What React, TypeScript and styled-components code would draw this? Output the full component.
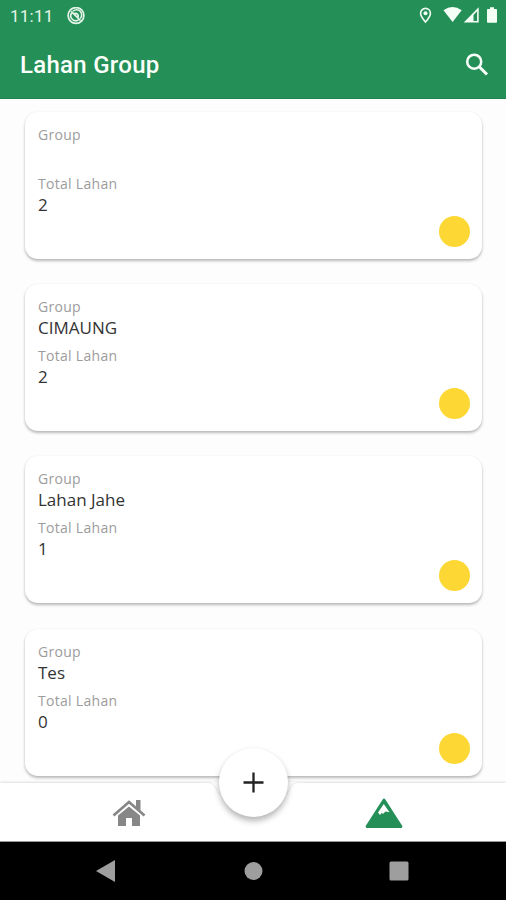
import React from 'react';
import styled, { createGlobalStyle } from 'styled-components';

const GlobalStyle = createGlobalStyle`
  * { box-sizing: border-box; }
  body { margin: 0; background: #fdfdfd; }
`;

const Screen = styled.div`
  width: 506px;
  height: 900px;
  display: flex;
  flex-direction: column;
  overflow: hidden;
  background: #fdfdfd;
  font-family: 'Open Sans', sans-serif;
`;

const Header = styled.header`
  height: 98.5px;
  flex: none;
  background: #249057;
  border-bottom: 1px solid #1d864d;
  color: #fafffb;
  font-family: Roboto, sans-serif;
`;

const StatusBar = styled.div`
  height: 32px;
  display: flex;
  align-items: center;
  padding: 0 8px 0 10px;
  color: #e4f5e8;
`;

const Clock = styled.span`
  width: 57px;
  font-size: 17px;
  line-height: 32px;
  letter-spacing: 0.25px;
`;

const StatusIcons = styled.div`
  display: flex;
  align-items: center;
  margin-left: auto;
  color: #f4fff6;
`;

const AppBar = styled.div`
  height: 66px;
  display: flex;
  align-items: center;
  justify-content: space-between;
  padding: 0 17px 0 20px;
`;

const Title = styled.h1`
  margin: 0;
  font-size: 24px;
  font-weight: 500;
  line-height: 32px;
  letter-spacing: 0.28px;
`;

const IconButton = styled.button`
  display: flex;
  padding: 0;
  border: 0;
  background: none;
  color: inherit;
`;

const List = styled.main`
  flex: 1;
  min-height: 0;
  overflow: hidden;
  display: flex;
  flex-direction: column;
  gap: 25.36px;
  padding: 13px 24px 0 25px;
`;

const Card = styled.article`
  flex: none;
  height: 147px;
  display: flex;
  justify-content: space-between;
  padding: 12px 12px 12px 13px;
  border-radius: 13px;
  background: #fff;
  box-shadow: 0 2px 3px rgba(0, 0, 0, 0.27), 0 0 2px rgba(0, 0, 0, 0.05);
`;

const Fields = styled.dl`
  margin: 0;
`;

const Label = styled.dt`
  height: 21px;
  font-size: 14px;
  line-height: 21px;
  letter-spacing: 0.3px;
  color: #9c9c9c;
`;

const Value = styled.dd`
  height: 22px;
  margin: 0 0 6px;
  font-size: 17px;
  line-height: 22px;
  color: #333;
`;

const Dot = styled.span`
  align-self: flex-end;
  width: 31px;
  height: 31px;
  border-radius: 50%;
  background: #fdd835;
`;

const BottomNav = styled.nav`
  position: relative;
  flex: none;
  height: 59px;
  margin-top: -59px;
  display: grid;
  grid-template-columns: 1fr 1fr;
  background: #fff;
  border-bottom: 1px solid #999;
  box-shadow: 0 -1px 2px rgba(0, 0, 0, 0.12);
`;

const Tab = styled.a<{ $color: string; $shift: number }>`
  display: flex;
  justify-content: center;
  padding-top: 14px;
  padding-left: ${({ $shift }) => $shift}px;
  color: ${({ $color }) => $color};
`;

const Notch = styled.svg`
  position: absolute;
  left: 199px;
  top: -1px;
`;

const AddButton = styled.button`
  position: absolute;
  left: 219px;
  top: -35px;
  width: 69px;
  height: 69px;
  display: flex;
  align-items: center;
  justify-content: center;
  padding: 0;
  border: 0;
  border-radius: 50%;
  background: #fff;
  color: #222;
  box-shadow: 0 4px 6px rgba(0, 0, 0, 0.28), 0 0 3px rgba(0, 0, 0, 0.04);
`;

const SystemNav = styled.footer`
  flex: none;
  height: 58px;
  display: flex;
  align-items: center;
  justify-content: space-between;
  padding: 0 97px 0 96px;
  background: #000;
  color: #9e9e9e;
`;

const groups = [
  { name: '', total: 2 },
  { name: 'CIMAUNG', total: 2 },
  { name: 'Lahan Jahe', total: 1 },
  { name: 'Tes', total: 0 },
];

export default function App() {
  return (
    <>
      <GlobalStyle />
      <Screen>
        <Header>
          <StatusBar>
            <Clock>11:11</Clock>
            <svg width="18" height="18" viewBox="0 0 18 18" fill="none" stroke="currentColor">
              <circle cx="9" cy="8.500" r="7.900" strokeWidth="1.700" />
              <path d="M4.800 5.700a5 5 0 0 0 7 7M6 4.300a5 5 0 0 1 7.200 7.200" strokeWidth="1.600" />
              <path d="M4.200 4.300 13.500 13.500M7.300 6.500a3 3 0 0 1 3.800 3.800" strokeWidth="1.700" />
            </svg>
            <StatusIcons>
              <svg width="79" height="18" viewBox="0 0 79 18" fill="currentColor">
                <path
                  d="M6.500 1.400a4.900 4.900 0 0 0-4.900 4.900c0 3.400 4.900 8.700 4.900 8.700s4.900-5.300 4.900-8.700a4.900 4.900 0 0 0-4.900-4.900Z"
                  fill="none"
                  stroke="currentColor"
                  strokeWidth="1.600"
                />
                <circle cx="6.500" cy="6.200" r="2" />
                <path d="M24.500 3.200Q33.500-3.200 42.700 3.200L33.600 15Z" />
                <path d="M44.700 15.500 59.700.3v15.200ZM54.500 8v5.900h3.600V4.300Z" fillRule="evenodd" />
                <path d="M71 .3h4v1.800h2.200q.8 0 .8.800v12q0 .800-.800.800h-8.400q-.800 0-.800-.800v-12q0-.800.800-.800H71Z" />
              </svg>
            </StatusIcons>
          </StatusBar>
          <AppBar>
            <Title>Lahan Group</Title>
            <IconButton aria-label="Search">
              <svg width="24" height="24" viewBox="0 0 24 24" fill="none" stroke="currentColor">
                <circle cx="9.200" cy="8.700" r="7" strokeWidth="2.500" />
                <path d="m14 13.500 8 8" strokeWidth="3" />
              </svg>
            </IconButton>
          </AppBar>
        </Header>
        <List>
          {groups.map((group) => (
            <Card key={group.name}>
              <Fields>
                <Label>Group</Label>
                <Value>{group.name}</Value>
                <Label>Total Lahan</Label>
                <Value>{group.total}</Value>
              </Fields>
              <Dot />
            </Card>
          ))}
        </List>
        <BottomNav>
          <Tab $color="#878787" $shift={4}>
            <svg width="34" height="32" viewBox="0 0 34 32" fill="currentColor">
              <path d="M6 18.500 17 9.500l11 9V29h-8v-8h-6v8H6Z" />
              <path d="M1.500 18.500 17 5l15.500 13.500" fill="none" stroke="currentColor" strokeWidth="2.700" />
              <path d="M24 3h4.500v11L24 10Z" />
            </svg>
          </Tab>
          <Tab $color="#249057" $shift={8}>
            <svg width="38" height="32" viewBox="0 0 38 32" fill="currentColor">
              <path d="M19 3 36 29.500H2Z" stroke="currentColor" strokeWidth="2.800" strokeLinejoin="round" />
              <path d="m18.800 7 5.700 8.200-4-.700-2.300 2.300-1.700-.900-1.500 2-2-2.400Z" fill="#fff" />
            </svg>
          </Tab>
          <Notch width="108" height="44" viewBox="0 0 108 44" fill="none">
            <path d="M4 0h4c6 0 7 3 11 10 7 15 20 30 36 30s29-15 36-30c4-7 5-10 11-10h2Z" fill="#fdfdfd" />
            <path d="M4 .5h4c6 0 8 3 12 12M104 .5h-4c-6 0-8 3-12 12" stroke="#ececec" />
          </Notch>
          <AddButton aria-label="Add group">
            <svg width="22" height="22" viewBox="0 0 22 22" fill="none" stroke="currentColor" strokeWidth="2.300">
              <path d="M10.500 .5v20M.5 10.500h20" />
            </svg>
          </AddButton>
        </BottomNav>
        <SystemNav>
          <svg width="20" height="22" viewBox="0 0 20 22" fill="currentColor">
            <path d="M19 0v22L0 11Z" />
          </svg>
          <svg width="20" height="18" viewBox="0 0 20 18" fill="currentColor">
            <circle cx="10.500" cy="9" r="9" />
          </svg>
          <svg width="20" height="20" viewBox="0 0 20 20" fill="currentColor">
            <rect x=".5" y=".5" width="19" height="19" rx="1.500" />
          </svg>
        </SystemNav>
      </Screen>
    </>
  );
}
